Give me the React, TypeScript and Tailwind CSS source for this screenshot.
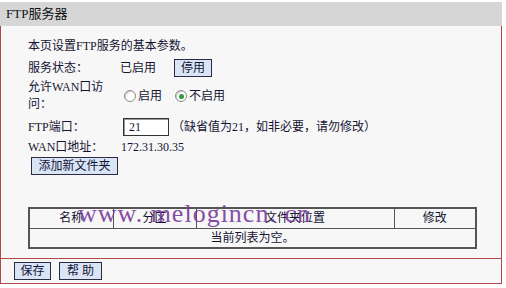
import React from 'react';

const font = 'font-["Liberation_Serif","Noto_Sans_CJK_SC",serif]';

const Btn: React.FC<{ label: string; className?: string }> = ({ label, className = '' }) => (
  <button
    className={`h-[18px] border border-[#2b2b45] bg-[#d9e5f5] text-[12px] leading-none text-[#14143a] ${className}`}
  >
    {label}
  </button>
);

const Radio: React.FC<{ checked?: boolean; label: string }> = ({ checked, label }) => (
  <label className="flex items-center gap-[2px]">
    <span className="flex h-[12px] w-[12px] items-center justify-center rounded-full border border-[#8c8c8c] bg-white shadow-[inset_1px_1px_1px_#c8c8c8]">
      {checked && <span className="h-[5px] w-[5px] rounded-full bg-[#2f9a37]" />}
    </span>
    <span>{label}</span>
  </label>
);

export default function App() {
  return (
    <div className={`relative h-[288px] w-[506px] bg-white text-[12px] text-[#141432] ${font}`}>
      <div className="mt-[2px] flex h-[24px] w-[502px] items-center bg-[#d6d6d6] pl-[6px] text-[13px] text-[#111]">
        FTP服务器
      </div>

      <div className="flex h-[258px] w-[502px] flex-col border-x border-b border-[#b04a4a] bg-[#f7f7f7]">
        <div className="pl-[27px] pt-[10px]">
          <div className="flex h-[20px] items-center">本页设置FTP服务的基本参数。</div>

          <div className="mt-[2px] flex h-[20px] items-center">
            <span className="w-[92px]">服务状态：</span>
            <span className="w-[54px]">已启用</span>
            <Btn label="停用" className="w-[38px] h-[17px]" />
          </div>

          <div className="flex h-[36px] items-center">
            <div className="w-[96px] leading-[17px]">
              <div>允许WAN口访</div>
              <div>问：</div>
            </div>
            <div className="flex items-center gap-[13px]">
              <Radio label="启用" />
              <Radio checked label="不启用" />
            </div>
          </div>

          <div className="mt-[3px] flex h-[20px] items-center">
            <span className="w-[95px]">FTP端口：</span>
            <input
              readOnly
              value="21"
              className="h-[18px] w-[46px] border border-[#333] bg-white px-[5px] text-[12px] shadow-[inset_1px_1px_0_#999] outline-none"
            />
            <span className="ml-[3px]">（缺省值为21，如非必要，请勿修改）</span>
          </div>

          <div className="flex h-[20px] items-center">
            <span className="w-[93px]">WAN口地址：</span>
            <span>172.31.30.35</span>
          </div>

          <Btn label="添加新文件夹" className="ml-[3px] w-[87px]" />

          <table className="mt-[32px] w-[449px] border-collapse border-2 border-[#555] text-[12px]">
            <tbody>
              <tr className="h-[20px]">
                <td className="w-[84px] border border-[#555] text-center">名称</td>
                <td className="w-[83px] border border-[#555] text-center">分区</td>
                <td className="w-[198px] border border-[#555] text-center">文件夹位置</td>
                <td className="border border-[#555] text-center">修改</td>
              </tr>
              <tr className="h-[20px]">
                <td colSpan={4} className="border border-[#555] text-center">当前列表为空。</td>
              </tr>
            </tbody>
          </table>
        </div>

        <div className="mt-auto flex h-[25px] gap-[8px] border-t border-[#b04a4a] pl-[13px] pt-[3px]">
          <Btn label="保存" className="w-[37px]" />
          <Btn label="帮 助" className="w-[43px]" />
        </div>
      </div>

      <span className="pointer-events-none absolute left-[78px] top-[199px] font-['Liberation_Serif',serif] text-[26px] leading-none tracking-[1px] text-[#7a3c9c] opacity-90">
        www. melogincn. cn
      </span>
    </div>
  );
}
